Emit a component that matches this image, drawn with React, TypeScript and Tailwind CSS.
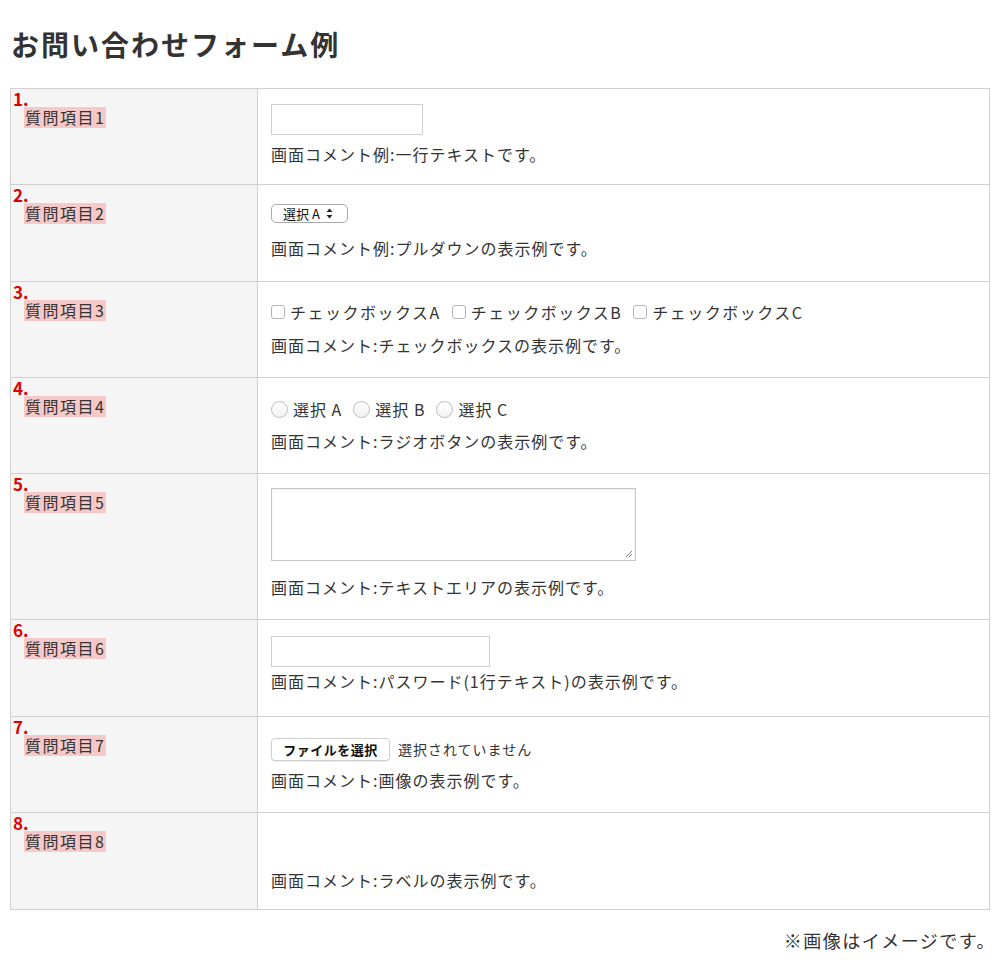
import React from 'react'

const font = { fontFamily: '"Noto Sans CJK JP", "Noto Sans", sans-serif' }

function Label({ n }: { n: number }) {
    return (
        <div className="flex flex-col items-start pl-[2px] pt-[1px]">
            <span className="text-[17px] font-bold leading-[17px] text-[#e00000]">{n}.</span>
            <span className="ml-[11px] bg-[#f6c9c9] px-[1px] text-[16px] leading-[21px] tracking-[1.5px] text-[#333]">
                質問項目{n}
            </span>
        </div>
    )
}

function Checkbox() {
    return <span className="inline-block h-[14px] w-[14px] shrink-0 rounded-[3px] border border-[#b5b5b5] bg-white" />
}

function Radio() {
    return <span className="inline-block h-[17px] w-[17px] shrink-0 rounded-full border border-[#bbb] bg-gradient-to-b from-white to-[#f2f2f2]" />
}

interface RowProps {
    n: number
    h: string
    children: React.ReactNode
    last?: boolean
}

function Row({ n, h, children, last }: RowProps) {
    return (
        <div className={`flex ${h} ${last ? '' : 'border-b border-[#d0d0d0]'}`}>
            <div className="w-[247px] shrink-0 border-r border-[#d0d0d0] bg-[#f5f5f5]">
                <Label n={n} />
            </div>
            <div className="flex-1 pl-[13px] text-[16px] tracking-[1px] text-[#333]">{children}</div>
        </div>
    )
}

export default function App() {
    return (
        <div style={font} className="min-h-[979px] bg-white px-[10px] text-[#333]">
            <h1 className="pl-[1px] pt-[25px] text-[28px] font-bold leading-[38px] tracking-[2px] text-[#333]">お問い合わせフォーム例</h1>

            <div className="mt-[25px] w-[980px] border border-[#d0d0d0]">
                <Row n={1} h="h-[96px]">
                    <div className="pt-[15px]">
                        <div className="h-[31px] w-[152px] border border-[#cfcfcf] bg-white" />
                    </div>
                    <p className="mt-[8px] leading-[22px]">画面コメント例:一行テキストです。</p>
                </Row>

                <Row n={2} h="h-[97px]">
                    <div className="pt-[19px]">
                        <div className="flex h-[19px] w-[77px] items-center rounded-[5px] border border-[#a9a9a9] bg-white pl-[11px] text-[13px] leading-none tracking-normal text-[#111]">
                            <span>選択 A</span>
                            <svg width="7" height="11" viewBox="0 0 7 11" className="ml-[6px]">
                                <path d="M3.5 0.5 L6.5 4 L0.5 4 Z" fill="#222" />
                                <path d="M3.5 10.5 L6.5 7 L0.5 7 Z" fill="#222" />
                            </svg>
                        </div>
                    </div>
                    <p className="mt-[14px] leading-[22px]">画面コメント例:プルダウンの表示例です。</p>
                </Row>

                <Row n={3} h="h-[96px]">
                    <div className="mt-[19px] flex h-[22px] items-center gap-[5px] text-[16px] tracking-[1.5px] text-[#333]">
                        <Checkbox />
                        <span className="mr-[6px]">チェックボックスA</span>
                        <Checkbox />
                        <span className="mr-[6px]">チェックボックスB</span>
                        <Checkbox />
                        <span>チェックボックスC</span>
                    </div>
                    <p className="mt-[11px] leading-[22px]">画面コメント:チェックボックスの表示例です。</p>
                </Row>

                <Row n={4} h="h-[96px]">
                    <div className="mt-[20px] flex h-[22px] items-center gap-[5px] text-[16px] tracking-[1px] text-[#333]">
                        <Radio />
                        <span className="mr-[6px]">選択 A</span>
                        <Radio />
                        <span className="mr-[6px]">選択 B</span>
                        <Radio />
                        <span>選択 C</span>
                    </div>
                    <p className="mt-[10px] leading-[22px]">画面コメント:ラジオボタンの表示例です。</p>
                </Row>

                <Row n={5} h="h-[146px]">
                    <div className="relative mt-[14px] h-[73px] w-[365px] border border-[#c6c6c6] bg-white shadow-[inset_0_1px_2px_rgba(0,0,0,0.08)]">
                        <svg width="8" height="8" viewBox="0 0 8 8" className="absolute bottom-[2px] right-[2px]">
                            <path d="M7 1 L1 7 M7 4 L4 7" stroke="#777" strokeWidth="1" />
                        </svg>
                    </div>
                    <p className="mt-[15px] leading-[22px]">画面コメント:テキストエリアの表示例です。</p>
                </Row>

                <Row n={6} h="h-[97px]">
                    <div className="pt-[16px]">
                        <div className="h-[31px] w-[219px] border border-[#cfcfcf] bg-white" />
                    </div>
                    <p className="mt-[3px] leading-[22px]">画面コメント:パスワード(1行テキスト)の表示例です。</p>
                </Row>

                <Row n={7} h="h-[96px]">
                    <div className="mt-[21px] flex items-center gap-[8px]">
                        <span className="inline-flex h-[23px] w-[119px] items-center justify-center rounded-[4px] border border-[#cfcfcf] bg-white text-[13px] font-bold tracking-[0.5px] text-[#111] shadow-[0_1px_1px_rgba(0,0,0,0.08)]">
                            ファイルを選択
                        </span>
                        <span className="text-[14px] tracking-[1px] text-[#333]">選択されていません</span>
                    </div>
                    <p className="mt-[8px] leading-[22px]">画面コメント:画像の表示例です。</p>
                </Row>

                <Row n={8} h="h-[96px]" last>
                    <p className="mt-[56px] leading-[22px]">画面コメント:ラベルの表示例です。</p>
                </Row>
            </div>

            <p className="mt-[17px] w-[986px] text-right text-[18px] leading-[26px] tracking-[1.5px] text-[#333]">※画像はイメージです。</p>
        </div>
    )
}
